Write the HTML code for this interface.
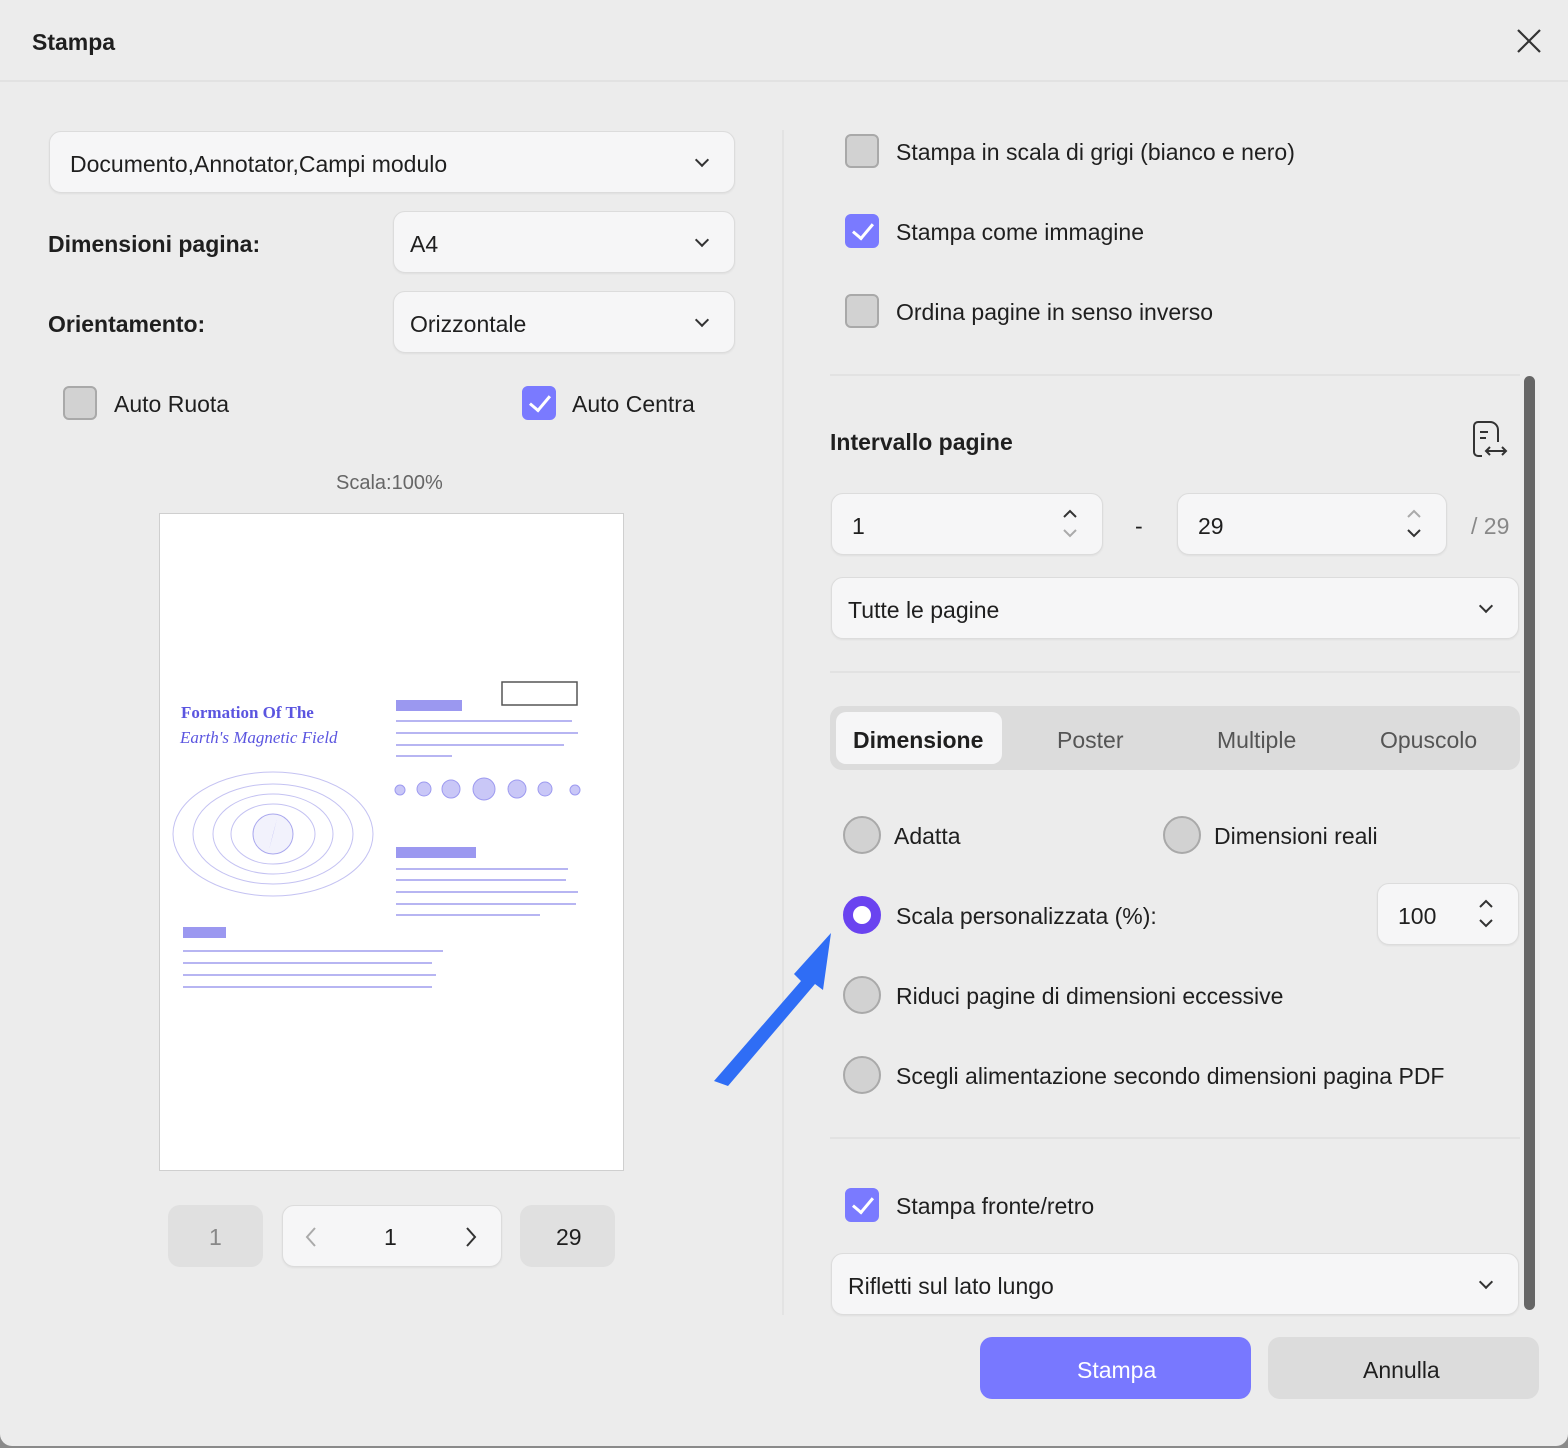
<!DOCTYPE html>
<html><head><meta charset="utf-8">
<style>
*{box-sizing:border-box;margin:0;padding:0}
body{width:1568px;height:1448px;background:#8a8a8a;font-family:"Liberation Sans",sans-serif;color:#1f1f1f;position:relative;overflow:hidden}
.dlg{position:absolute;left:0;top:0;width:1568px;height:1446px;background:#ececec;border-radius:0 0 12px 12px;overflow:hidden}
.a{position:absolute}
.t{position:absolute;font-size:23px;line-height:28px;white-space:nowrap}
.b{font-weight:bold}
.box{position:absolute;background:#f6f6f7;border:1px solid #dcdcdc;border-radius:12px;box-shadow:0 1px 2px rgba(0,0,0,.06)}
.chev{position:absolute;width:10px;height:10px;border-right:2px solid #333;border-bottom:2px solid #333;transform:rotate(45deg)}
.cb{position:absolute;width:34px;height:34px;border-radius:6px;background:#d2d2d2;border:2px solid #a9a9a9}
.cb.on{background:#7a7aff;border-color:#7a7aff}
.cb.on::after{content:"";position:absolute;left:10px;top:3px;width:9px;height:17px;border-right:3px solid #fff;border-bottom:3px solid #fff;transform:rotate(40deg)}
.rd{position:absolute;width:38px;height:38px;border-radius:50%;background:#d2d2d2;border:2px solid #a9a9a9}
.rd.on{background:#fff;border:10px solid #6a43f0}
.hr{position:absolute;height:2px;background:#e2e2e2}
</style></head><body>
<div class="dlg">
<div class="t b" style="left:32px;top:28px">Stampa</div>
<svg class="a" style="left:1516px;top:28px" width="26" height="26"><path d="M2 2L24 24M24 2L2 24" stroke="#333" stroke-width="2.2"/></svg>
<div class="hr" style="left:0;top:80px;width:1568px"></div>

<div class="box" style="left:49px;top:131px;width:686px;height:62px"></div>
<div class="t" style="left:70px;top:150px">Documento,Annotator,Campi modulo</div>
<div class="chev" style="left:697px;top:155px"></div>
<div class="t b" style="left:48px;top:230px">Dimensioni pagina:</div>
<div class="box" style="left:393px;top:211px;width:342px;height:62px"></div>
<div class="t" style="left:410px;top:230px">A4</div>
<div class="chev" style="left:697px;top:235px"></div>
<div class="t b" style="left:48px;top:310px">Orientamento:</div>
<div class="box" style="left:393px;top:291px;width:342px;height:62px"></div>
<div class="t" style="left:410px;top:310px">Orizzontale</div>
<div class="chev" style="left:697px;top:315px"></div>
<div class="cb" style="left:63px;top:386px"></div>
<div class="t" style="left:114px;top:390px">Auto Ruota</div>
<div class="cb on" style="left:522px;top:386px"></div>
<div class="t" style="left:572px;top:390px">Auto Centra</div>
<div class="t" style="left:336px;top:469px;font-size:20px;color:#666">Scala:100%</div>

<div class="a" style="left:159px;top:513px;width:465px;height:658px;background:#fff;border:1px solid #cfcfcf">
<svg width="463" height="656" style="position:absolute;left:0;top:0" font-family="Liberation Serif">
<text x="21" y="204" font-size="17" font-weight="bold" fill="#5b55e0">Formation Of The</text>
<text x="20" y="229" font-size="17" font-style="italic" fill="#5b55e0">Earth's Magnetic Field</text>
<rect x="342" y="168" width="75" height="23" fill="none" stroke="#555" stroke-width="1.5"/>
<rect x="236" y="186" width="66" height="11" fill="#9b98f0"/>
<g stroke="#b7b5f2" stroke-width="2">
<line x1="236" y1="207" x2="412" y2="207"/><line x1="236" y1="219" x2="418" y2="219"/><line x1="236" y1="231" x2="404" y2="231"/><line x1="236" y1="242" x2="292" y2="242"/>
<line x1="236" y1="355" x2="408" y2="355"/><line x1="236" y1="366" x2="406" y2="366"/><line x1="236" y1="378" x2="418" y2="378"/><line x1="236" y1="390" x2="416" y2="390"/><line x1="236" y1="401" x2="380" y2="401"/>
<line x1="23" y1="437" x2="283" y2="437"/><line x1="23" y1="449" x2="272" y2="449"/><line x1="23" y1="461" x2="276" y2="461"/><line x1="23" y1="473" x2="272" y2="473"/>
</g>
<rect x="236" y="333" width="80" height="11" fill="#9b98f0"/>
<rect x="23" y="413" width="43" height="11" fill="#9b98f0"/>
<g fill="#c9c7f7" stroke="#9d9af0"><circle cx="240" cy="276" r="5"/><circle cx="264" cy="275" r="7"/><circle cx="291" cy="275" r="9"/><circle cx="324" cy="275" r="11"/><circle cx="357" cy="275" r="9"/><circle cx="385" cy="275" r="7"/><circle cx="415" cy="276" r="5"/></g>
<g fill="none" stroke="#c4c2f2" stroke-width="1">
<ellipse cx="113" cy="320" rx="100" ry="62"/><ellipse cx="113" cy="320" rx="80" ry="50"/><ellipse cx="113" cy="320" rx="60" ry="40"/><ellipse cx="113" cy="320" rx="42" ry="30"/></g>
<circle cx="113" cy="320" r="20" fill="#f2f2fc" stroke="#aaa8ee"/>
<path d="M117 305L109 336L113 320Z" fill="#6a65e8"/>
</svg>
</div>

<div class="a" style="left:168px;top:1205px;width:95px;height:62px;background:#e0e0e0;border-radius:12px"></div>
<div class="t" style="left:209px;top:1223px;color:#888">1</div>
<div class="box" style="left:282px;top:1205px;width:220px;height:62px"></div>
<svg class="a" style="left:304px;top:1226px" width="14" height="22"><path d="M11 2L3 11L11 20" fill="none" stroke="#aaa" stroke-width="2"/></svg>
<div class="t" style="left:384px;top:1223px">1</div>
<svg class="a" style="left:464px;top:1226px" width="14" height="22"><path d="M3 2L11 11L3 20" fill="none" stroke="#333" stroke-width="2"/></svg>
<div class="a" style="left:520px;top:1205px;width:95px;height:62px;background:#e0e0e0;border-radius:12px"></div>
<div class="t" style="left:556px;top:1223px">29</div>

<div class="a" style="left:782px;top:130px;width:2px;height:1185px;background:#e3e3e3"></div>

<div class="cb" style="left:845px;top:134px"></div>
<div class="t" style="left:896px;top:138px">Stampa in scala di grigi (bianco e nero)</div>
<div class="cb on" style="left:845px;top:214px"></div>
<div class="t" style="left:896px;top:218px">Stampa come immagine</div>
<div class="cb" style="left:845px;top:294px"></div>
<div class="t" style="left:896px;top:298px">Ordina pagine in senso inverso</div>
<div class="hr" style="left:830px;top:374px;width:690px"></div>
<div class="a" style="left:1524px;top:376px;width:11px;height:934px;background:#666;border-radius:6px"></div>

<div class="t b" style="left:830px;top:428px">Intervallo pagine</div>
<svg class="a" style="left:1470px;top:420px" width="40" height="40" fill="none" stroke="#333" stroke-width="2"><path d="M12 36H8a4 4 0 0 1-4-4V6a4 4 0 0 1 4-4h12a8 8 0 0 1 8 8v12"/><path d="M10 12h8M10 18h6"/><path d="M16 31h20M20 27l-4 4 4 4M32 27l4 4-4 4"/></svg>
<div class="box" style="left:831px;top:493px;width:272px;height:62px"></div>
<div class="t" style="left:852px;top:512px">1</div>
<svg class="a" style="left:1060px;top:505px" width="20" height="36" fill="none" stroke-width="2"><path d="M4 12l6-6 6 6" stroke="#333"/><path d="M4 25l6 6 6-6" stroke="#aaa"/></svg>
<div class="t" style="left:1135px;top:512px">-</div>
<div class="box" style="left:1177px;top:493px;width:270px;height:62px"></div>
<div class="t" style="left:1198px;top:512px">29</div>
<svg class="a" style="left:1404px;top:505px" width="20" height="36" fill="none" stroke-width="2"><path d="M4 12l6-6 6 6" stroke="#aaa"/><path d="M4 25l6 6 6-6" stroke="#333"/></svg>
<div class="t" style="left:1471px;top:512px;color:#888">/ 29</div>
<div class="box" style="left:831px;top:577px;width:688px;height:62px"></div>
<div class="t" style="left:848px;top:596px">Tutte le pagine</div>
<div class="chev" style="left:1481px;top:601px"></div>
<div class="hr" style="left:830px;top:671px;width:690px"></div>

<div class="a" style="left:830px;top:706px;width:690px;height:64px;background:#dcdcdc;border-radius:12px"></div>
<div class="a" style="left:836px;top:712px;width:166px;height:52px;background:#f6f6f7;border-radius:10px"></div>
<div class="t b" style="left:853px;top:726px">Dimensione</div>
<div class="t" style="left:1057px;top:726px;color:#555">Poster</div>
<div class="t" style="left:1217px;top:726px;color:#555">Multiple</div>
<div class="t" style="left:1380px;top:726px;color:#555">Opuscolo</div>

<div class="rd" style="left:843px;top:816px"></div>
<div class="t" style="left:894px;top:822px">Adatta</div>
<div class="rd" style="left:1163px;top:816px"></div>
<div class="t" style="left:1214px;top:822px">Dimensioni reali</div>
<div class="rd on" style="left:843px;top:896px"></div>
<div class="t" style="left:896px;top:902px">Scala personalizzata (%):</div>
<div class="box" style="left:1377px;top:883px;width:142px;height:62px"></div>
<div class="t" style="left:1398px;top:902px">100</div>
<svg class="a" style="left:1476px;top:895px" width="20" height="36" fill="none" stroke="#333" stroke-width="2"><path d="M4 12l6-6 6 6M4 25l6 6 6-6"/></svg>
<div class="rd" style="left:843px;top:976px"></div>
<div class="t" style="left:896px;top:982px">Riduci pagine di dimensioni eccessive</div>
<div class="rd" style="left:843px;top:1056px"></div>
<div class="t" style="left:896px;top:1062px">Scegli alimentazione secondo dimensioni pagina PDF</div>
<div class="hr" style="left:830px;top:1137px;width:690px"></div>

<div class="cb on" style="left:845px;top:1188px"></div>
<div class="t" style="left:896px;top:1192px">Stampa fronte/retro</div>
<div class="box" style="left:831px;top:1253px;width:688px;height:62px"></div>
<div class="t" style="left:848px;top:1272px">Rifletti sul lato lungo</div>
<div class="chev" style="left:1481px;top:1277px"></div>

<div class="a" style="left:980px;top:1337px;width:271px;height:62px;background:#7878ff;border-radius:12px"></div>
<div class="t" style="left:1077px;top:1356px;color:#fff">Stampa</div>
<div class="a" style="left:1268px;top:1337px;width:271px;height:62px;background:#dcdcdc;border-radius:12px"></div>
<div class="t" style="left:1363px;top:1356px">Annulla</div>

<svg class="a" style="left:712px;top:920px" width="150" height="180"><path d="M16 163L103 63L96 56L133 15L125 72L117 66L30 168Z" fill="#2f6df5" transform="translate(-14 -2)"/></svg>
</div>
</body></html>
